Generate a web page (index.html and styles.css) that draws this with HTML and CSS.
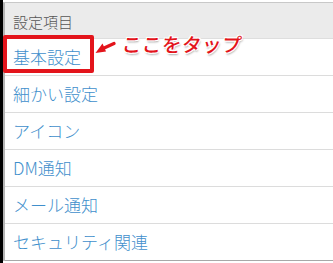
FILE: index.html
```html
<html>
<head>
    <meta charset="utf-8">
    <link rel="stylesheet" href="styles.css">
</head>
<body>
    <div class="frame">
        <div class="settings">
            <div class="settings-header">設定項目</div>
            <div class="settings-item first">
                基本設定
                <div class="tap-box"></div>
                <div class="tap-note">
                    <svg class="tap-arrow" width="22" height="14" viewBox="0 0 22 14">
                        <path d="M20 2.5 L9 7.5" stroke="#e3141b" stroke-width="3.2" stroke-linecap="round" fill="none"/>
                        <path d="M1.5 12 L8.5 2.5 L12 10.5 Z" fill="#e3141b"/>
                    </svg>
                    <span class="tap-text">ここをタップ</span>
                </div>
            </div>
            <div class="settings-item">細かい設定</div>
            <div class="settings-item">アイコン</div>
            <div class="settings-item">DM通知</div>
            <div class="settings-item">メール通知</div>
            <div class="settings-item last">セキュリティ関連</div>
        </div>
    </div>
</body>
</html>
```

FILE: styles.css
```css
body {
    margin: 0;
    background-color: #ffffff;
    font-family: "Noto Sans CJK JP", "Noto Sans", sans-serif;
}

.frame {
    border-left: 3px solid #000000;
    padding-top: 2px;
    height: 261px;
}

.settings {
    border-top: 1px solid #c8c8c8;
    border-left: 2px solid #b4b4b4;
}

.settings-header {
    height: 35px;
    line-height: 37px;
    padding-left: 8px;
    background-color: #ebebeb;
    border-bottom: 1px solid #dedede;
    color: #555555;
    font-size: 15px;
    font-weight: 300;
}

.settings-item {
    position: relative;
    height: 36px;
    line-height: 36px;
    padding-left: 8px;
    border-bottom: 1px solid #dcdcdc;
    color: #3f8fcc;
    font-size: 17px;
    font-weight: 300;
}

.settings-item.last {
    border-bottom-color: #a8a8a8;
}

.tap-box {
    position: absolute;
    left: -2px;
    top: -4px;
    width: 83px;
    height: 30px;
    border: 4px solid #e3141b;
    border-radius: 2px;
}

.tap-note {
    position: absolute;
    left: 89px;
    top: -6px;
    display: flex;
    align-items: center;
    gap: 6px;
    line-height: 1;
}

.tap-arrow {
    margin-top: 8px;
}

.tap-text {
    color: #e3141b;
    font-size: 19.5px;
    font-weight: 500;
    letter-spacing: 0.5px;
    transform: skewX(-6deg);
    text-shadow: -1px -1px 0 #fff, 1px -1px 0 #fff, -1px 1px 0 #fff, 1px 1px 0 #fff, 1px 2px 2px rgba(0, 0, 0, 0.35);
}
```
